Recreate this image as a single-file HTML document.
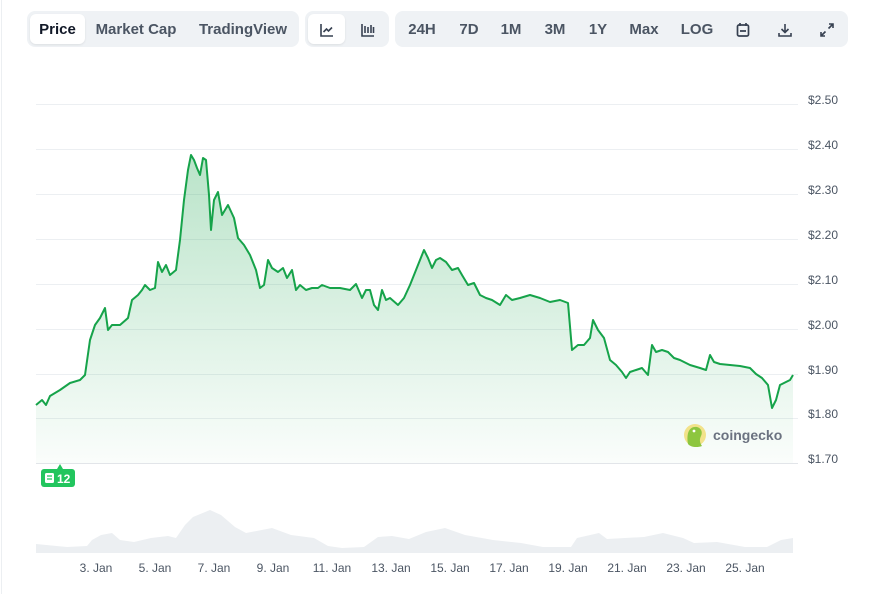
<!DOCTYPE html>
<html><head><meta charset="utf-8"><style>
body{margin:0;width:873px;height:594px;background:#fff;font-family:"Liberation Sans",sans-serif;position:relative;overflow:hidden}
.lb{position:absolute;left:1px;top:0;width:1px;height:594px;background:#eceff2}
.g{position:absolute;top:11px;height:36px;background:#eff2f5;border-radius:8px}
.b{position:absolute;top:3px;height:30px;line-height:31px;font-size:15px;font-weight:bold;color:#4b5563;text-align:center}
.w{background:#fff;border-radius:6px;color:#111827;box-shadow:0 1px 2px rgba(0,0,0,.08)}
.yl{position:absolute;left:808px;font-size:12px;color:#4b5563}
.xl{position:absolute;top:561px;font-size:12px;color:#4b5563;width:60px;text-align:center}
</style></head><body>
<div class="lb"></div>
<div class="g" style="left:27px;width:272px">
 <div class="b w" style="left:3px;width:55px">Price</div>
 <div class="b" style="left:68px;width:82px">Market Cap</div>
 <div class="b" style="left:170px;width:92px">TradingView</div>
</div>
<div class="g" style="left:305px;width:84px">
 <div class="b w" style="left:3px;width:37px"><svg width="16" height="16" viewBox="0 0 16 16" style="margin-top:8px" fill="none" stroke="#374151" stroke-width="1.6"><path d="M2 2v12h12"/><path d="M4.5 10l3-3 2 2 3.5-3.5"/></svg></div>
 <div class="b" style="left:44px;width:37px"><svg width="16" height="16" viewBox="0 0 16 16" style="margin-top:8px" fill="none" stroke="#374151" stroke-width="1.6"><path d="M2 2v12h12"/><path d="M5 4v7M8 5v6M11 3v8M13.5 5v6"/></svg></div>
</div>
<div class="g" style="left:395px;width:453px">
 <div class="b" style="left:6px;width:42px">24H</div>
 <div class="b" style="left:56px;width:36px">7D</div>
 <div class="b" style="left:98px;width:36px">1M</div>
 <div class="b" style="left:142px;width:36px">3M</div>
 <div class="b" style="left:185px;width:36px">1Y</div>
 <div class="b" style="left:229px;width:40px">Max</div>
 <div class="b" style="left:282px;width:40px">LOG</div>
 <div class="b" style="left:335px;width:26px"><svg width="14" height="16" viewBox="0 0 14 16" style="margin-top:8px" fill="none" stroke="#374151" stroke-width="1.7"><rect x="1.5" y="3" width="11" height="11" rx="1.5"/><path d="M4 1v3M10 1v3M4 9h6"/></svg></div>
 <div class="b" style="left:377px;width:26px"><svg width="16" height="16" viewBox="0 0 16 16" style="margin-top:8px" fill="none" stroke="#374151" stroke-width="1.6"><path d="M8 2v8M4.5 7l3.5 3.5L11.5 7M2 11v3h12v-3"/></svg></div>
 <div class="b" style="left:419px;width:26px"><svg width="16" height="16" viewBox="0 0 16 16" style="margin-top:8px" fill="none" stroke="#374151" stroke-width="1.6"><path d="M9.5 6.5L14 2M10 2h4v4M6.5 9.5L2 14M2 10v4h4"/></svg></div>
</div>
<svg width="873" height="594" style="position:absolute;left:0;top:0">
<defs><linearGradient id="gr" x1="0" y1="0" x2="0" y2="1"><stop offset="0" stop-color="#16a34a" stop-opacity=".3"/><stop offset="1" stop-color="#16a34a" stop-opacity=".02"/></linearGradient></defs>
<g stroke="#eceff2" stroke-width="1">
<line x1="36" x2="798" y1="104.5" y2="104.5"/><line x1="36" x2="798" y1="149.5" y2="149.5"/><line x1="36" x2="798" y1="194.5" y2="194.5"/><line x1="36" x2="798" y1="239.5" y2="239.5"/><line x1="36" x2="798" y1="284.5" y2="284.5"/><line x1="36" x2="798" y1="329.5" y2="329.5"/><line x1="36" x2="798" y1="374.5" y2="374.5"/><line x1="36" x2="798" y1="418.5" y2="418.5"/><line x1="36" x2="798" y1="463.5" y2="463.5" stroke="#e2e5e9"/>
</g>
<path d="M36,405 L42,400 46,405 50,396 60,390 70,383 80,380 85,375 90,340 95,325 100,318 105,308 108,330 112,325 120,325 128,318 132,300 138,295 142,290 145,285 150,290 155,288 158,262 162,272 166,265 170,275 176,270 180,240 184,200 188,170 191,155 194,160 197,168 200,175 203,158 206,160 209,195 211,230 214,200 218,192 222,215 228,205 234,218 238,238 244,245 250,255 256,270 260,288 264,285 268,260 272,268 278,272 283,268 287,278 292,270 296,290 300,285 306,290 312,288 318,288 322,285 330,288 340,288 350,290 356,284 362,298 366,290 370,290 374,305 378,310 382,290 386,300 390,298 398,305 404,298 410,285 416,270 420,260 424,250 428,258 432,268 436,260 440,258 446,262 452,270 458,268 462,275 468,285 474,283 480,295 486,298 492,300 500,305 506,295 512,300 520,298 530,295 540,298 550,302 560,300 568,303 572,350 578,345 584,345 590,338 593,320 598,330 604,338 610,360 616,365 622,372 626,378 630,372 636,370 642,368 648,375 652,345 656,352 662,350 668,352 674,358 680,360 690,365 700,368 706,370 710,355 714,362 720,364 730,365 740,366 750,368 756,374 762,378 768,385 772,408 776,400 780,385 784,383 790,380 793,375" fill="none" stroke="#16a34a" stroke-width="2" stroke-linejoin="round"/>
<path d="M36,405 L42,400 46,405 50,396 60,390 70,383 80,380 85,375 90,340 95,325 100,318 105,308 108,330 112,325 120,325 128,318 132,300 138,295 142,290 145,285 150,290 155,288 158,262 162,272 166,265 170,275 176,270 180,240 184,200 188,170 191,155 194,160 197,168 200,175 203,158 206,160 209,195 211,230 214,200 218,192 222,215 228,205 234,218 238,238 244,245 250,255 256,270 260,288 264,285 268,260 272,268 278,272 283,268 287,278 292,270 296,290 300,285 306,290 312,288 318,288 322,285 330,288 340,288 350,290 356,284 362,298 366,290 370,290 374,305 378,310 382,290 386,300 390,298 398,305 404,298 410,285 416,270 420,260 424,250 428,258 432,268 436,260 440,258 446,262 452,270 458,268 462,275 468,285 474,283 480,295 486,298 492,300 500,305 506,295 512,300 520,298 530,295 540,298 550,302 560,300 568,303 572,350 578,345 584,345 590,338 593,320 598,330 604,338 610,360 616,365 622,372 626,378 630,372 636,370 642,368 648,375 652,345 656,352 662,350 668,352 674,358 680,360 690,365 700,368 706,370 710,355 714,362 720,364 730,365 740,366 750,368 756,374 762,378 768,385 772,408 776,400 780,385 784,383 790,380 793,375 L793,463 36,463Z" fill="url(#gr)"/>
<path d="M36,544 L67,547 87,546 92,540 101,535 112,533 120,540 134,542 151,538 168,536 176,538 185,525 193,517 210,510 221,515 235,527 246,533 272,528 291,535 314,538 328,546 342,548 364,547 378,537 392,536 409,539 426,532 445,528 465,535 493,540 521,543 543,547 571,547 577,538 599,533 607,539 644,537 663,533 683,538 694,543 717,542 745,547 767,547 781,540 793,538 L793,553 36,553Z" fill="#eceff2"/>
<path d="M57,469 L60,464 63,469Z" fill="#22c55e"/>
<rect x="41" y="469" width="34" height="18" rx="3" fill="#22c55e"/>
<rect x="45" y="473" width="9" height="10" rx="1.5" fill="#fff"/><path d="M47,476h5M47,479h5" stroke="#22c55e" stroke-width="1.2"/>
<text x="57" y="483" font-size="12" font-weight="bold" fill="#fff" font-family="Liberation Sans">12</text>
<circle cx="695" cy="435" r="11" fill="#f2e28a"/><path d="M688,444 C686,432 690,426 697,427 C701,428 703,432 701,436 C699,440 700,443 702,446 C697,448 690,447 688,444Z" fill="#8dc63f"/><circle cx="694" cy="431" r="1.4" fill="#fff"/>
<text x="713" y="440" font-size="14" font-weight="bold" fill="#6b7280" font-family="Liberation Sans">coingecko</text>
</svg>
<div class="yl" style="top:93px">$2.50</div><div class="yl" style="top:138px">$2.40</div><div class="yl" style="top:183px">$2.30</div><div class="yl" style="top:228px">$2.20</div><div class="yl" style="top:273px">$2.10</div><div class="yl" style="top:318px">$2.00</div><div class="yl" style="top:363px">$1.90</div><div class="yl" style="top:407px">$1.80</div><div class="yl" style="top:452px">$1.70</div>
<div class="xl" style="left:66px">3. Jan</div><div class="xl" style="left:125px">5. Jan</div><div class="xl" style="left:184px">7. Jan</div><div class="xl" style="left:243px">9. Jan</div><div class="xl" style="left:302px">11. Jan</div><div class="xl" style="left:361px">13. Jan</div><div class="xl" style="left:420px">15. Jan</div><div class="xl" style="left:479px">17. Jan</div><div class="xl" style="left:538px">19. Jan</div><div class="xl" style="left:597px">21. Jan</div><div class="xl" style="left:656px">23. Jan</div><div class="xl" style="left:715px">25. Jan</div>
</body></html>
